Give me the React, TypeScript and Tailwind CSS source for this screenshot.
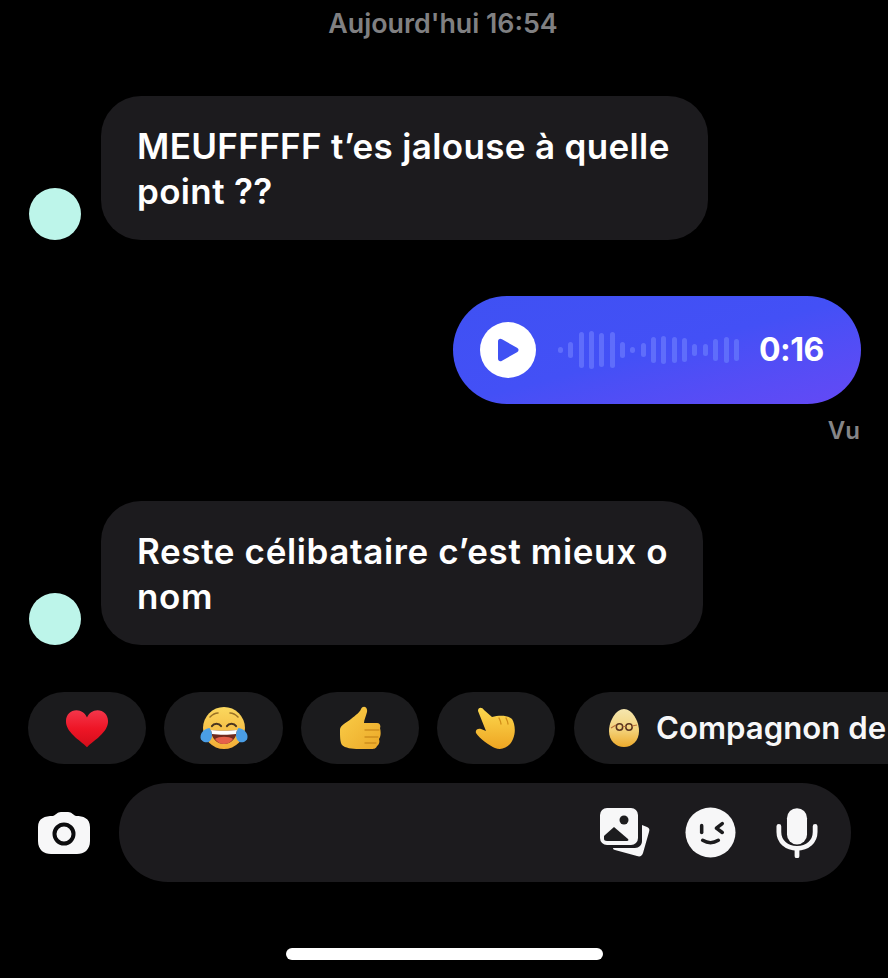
const bars = [6, 16, 36, 38, 34, 36, 16, 6, 14, 26, 28, 26, 24, 12, 12, 22, 26, 22];

function Heart() {
  return (
    <svg width="44" height="39" viewBox="0 0 46 40">
      <defs>
        <linearGradient id="h" x1="0" y1="0" x2="0" y2="1">
          <stop offset="0" stopColor="#f4364a" />
          <stop offset="0.5" stopColor="#ee1526" />
          <stop offset="1" stopColor="#d40d1a" />
        </linearGradient>
      </defs>
      <path d="M23 39.500C15 32 1 24 1 12.500 1 5.500 6 1 12 1c5 0 9 3 11 7.500C25 4 29 1 34 1c6 0 11 4.500 11 11.500C45 24 31 32 23 39.500Z" fill="url(#h)" />
    </svg>
  );
}

function Laugh() {
  return (
    <svg width="48" height="44" viewBox="0 0 48 44">
      <defs>
        <linearGradient id="f" x1="0" y1="0" x2="0" y2="1">
          <stop offset="0" stopColor="#fbd85e" />
          <stop offset="1" stopColor="#f2ad36" />
        </linearGradient>
      </defs>
      <circle cx="24" cy="22" r="21" fill="url(#f)" />
      <path d="M12 20c2-3 7-3 9 0M27 20c2-3 7-3 9 0" stroke="#4a3520" strokeWidth="2.200" fill="none" strokeLinecap="round" />
      <path d="M10 11c2-2 5-4 8-4M30 7c3 0 6 2 8 4" stroke="#9a7226" strokeWidth="1.600" fill="none" strokeLinecap="round" />
      <path d="M11 24c7 1 19 1 26 0 0 8-6 14-13 14S11 32 11 24Z" fill="#6e2a1e" />
      <path d="M15 33c4-3 14-3 18 0-2 3-5 5-9 5s-7-2-9-5Z" fill="#e5604a" />
      <path d="M11 24c7 1 19 1 26 0l-1 4c-7 1-17 1-24 0Z" fill="#fff" />
      <path d="M0.500 31c0-4 3-8 9-9 3 4 4 11-1 14-4 1-8-1-8-5Z" fill="#4a9ee6" />
      <path d="M47.500 31c0-4-3-8-9-9-3 4-4 11 1 14 4 1 8-1 8-5Z" fill="#4a9ee6" />
    </svg>
  );
}

function Thumb() {
  return (
    <svg width="42" height="44" viewBox="0 0 42 44">
      <defs>
        <linearGradient id="t" x1="0" y1="0" x2="1" y2="1">
          <stop offset="0" stopColor="#fbd04a" />
          <stop offset="1" stopColor="#eba828" />
        </linearGradient>
      </defs>
      <path d="M1 24C1 19 7 17 12 13 17 9 21 6 22 3 24-1 29 1 28 6 27 10 25 14 25 17L38 17C41 17 42 20 41 22 42 26 42 30 40 33 41 36 40 39 38 40 37 43 34 43 32 43L20 43C13 43 6 42 3 39 1 36 1 30 1 24Z" fill="url(#t)" />
      <path d="M26 24h14M26 31h13M26 37h11" stroke="#cf8f1c" strokeWidth="1.300" strokeLinecap="round" />
    </svg>
  );
}

function Point() {
  return (
    <svg width="42" height="44" viewBox="0 0 42 44">
      <defs>
        <linearGradient id="p" x1="0" y1="0" x2="0" y2="1">
          <stop offset="0" stopColor="#fcd84e" />
          <stop offset="1" stopColor="#eea522" />
        </linearGradient>
      </defs>
      <path d="M3 5C3 1 7 1 9 4L17 11C24 9 33 9 37 13 40 18 41 26 38 33 35 41 27 45 20 42 15 40 4 32 1 27 0 24 3 22 6 23L11 25Z" fill="url(#p)" />
      <path d="M24 12c1 2 2 4 2 6M31 12c1 2 2 4 2 6" stroke="#d08c18" strokeWidth="1.300" strokeLinecap="round" fill="none" />
    </svg>
  );
}

function Egg() {
  return (
    <svg width="32" height="38" viewBox="0 0 32 38">
      <defs>
        <linearGradient id="e" x1="0" y1="0" x2="0" y2="1">
          <stop offset="0" stopColor="#f5e6ae" />
          <stop offset="0.55" stopColor="#f3d27a" />
          <stop offset="1" stopColor="#eeab2c" />
        </linearGradient>
      </defs>
      <path d="M16 0c8 0 15 12 15 22 0 10-7 16-15 16S1 32 1 22C1 12 8 0 16 0Z" fill="url(#e)" />
      <circle cx="11.500" cy="18" r="3.200" fill="none" stroke="#5a3420" strokeWidth="1.500" />
      <circle cx="21" cy="18" r="3.200" fill="none" stroke="#5a3420" strokeWidth="1.500" />
      <path d="M14.700 17.500h3M3 19l5-3M29 16l-5 1" stroke="#b8703a" strokeWidth="1.200" />
    </svg>
  );
}

function Camera() {
  return (
    <svg width="52" height="44" viewBox="0 0 52 44">
      <path d="M15 5c3-1 4-4 8-4h7c4 0 5 3 8 4 7 0 14 2 14 11v14c0 9-6 13-13 13H13C6 43 0 39 0 30V16C0 7 7 5 15 5Z" fill="#f7f7f8" />
      <circle cx="26" cy="23" r="9.500" fill="none" stroke="#0c0c0e" strokeWidth="4" />
    </svg>
  );
}

function Gallery() {
  return (
    <svg width="50" height="50" viewBox="0 0 50 50">
      <path d="M42 17l5 2c2 1 3 2 2 5l-6 21c-1 3-3 4-6 3l-22-6c-1 0-2-1-2-2h22c4 0 7-3 7-7Z" fill="#f7f7f8" />
      <rect x="0" y="0" width="38" height="37" rx="7" fill="#f7f7f8" />
      <circle cx="24" cy="12" r="4.500" fill="#1c1c1e" />
      <path d="M5 27l9-8 14 12c1 1 0 2-1 2H7c-2 0-3-1-3-2v-3Z" fill="#1c1c1e" />
    </svg>
  );
}

function Sticker() {
  return (
    <svg width="51" height="51" viewBox="0 0 52 52">
      <circle cx="26" cy="26" r="25.500" fill="#f7f7f8" />
      <path d="M17 19v7" stroke="#1c1c1e" strokeWidth="3.600" strokeLinecap="round" />
      <path d="M38 17l-6 4.500 6 4.500" stroke="#1c1c1e" strokeWidth="3.600" strokeLinecap="round" strokeLinejoin="round" fill="none" />
      <path d="M18 34c5 3 11 3 16 0" stroke="#1c1c1e" strokeWidth="3.600" strokeLinecap="round" fill="none" />
    </svg>
  );
}

function Mic() {
  return (
    <svg width="42" height="50" viewBox="0 0 44 52">
      <rect x="11.500" y="0" width="21" height="38" rx="10.500" fill="#f7f7f8" />
      <path d="M3 19v6c0 10 8 17 19 17s19-7 19-17v-6" stroke="#f7f7f8" strokeWidth="5" strokeLinecap="round" fill="none" />
      <path d="M22 42v8" stroke="#f7f7f8" strokeWidth="5" strokeLinecap="round" />
    </svg>
  );
}

function Chip({ children, w }: { children: React.ReactNode; w: string }) {
  return <div className={`flex h-[72px] shrink-0 items-center justify-center rounded-[36px] bg-[#1b1b1d] ${w}`}>{children}</div>;
}

function Incoming({ lines, width, track }: { lines: string[]; width: string; track: string }) {
  return (
    <div className="flex items-end pl-[29px]">
      <div className="h-[52px] w-[52px] shrink-0 rounded-full bg-[#bdf5ea]" />
      <div className={`ml-5 h-[144px] rounded-[40px] bg-[#1c1b1e] pl-9 pt-[28px] text-[35px] leading-[45px] font-semibold text-white ${width} ${track}`}>
        {lines.map((l) => (
          <div key={l} className="whitespace-nowrap">{l}</div>
        ))}
      </div>
    </div>
  );
}

export default function App() {
  return (
    <div className="flex h-[978px] w-[888px] flex-col overflow-hidden bg-black font-['Inter','Liberation_Sans',sans-serif]">
      <div className="mt-[7px] h-[32px] pr-[2px] text-center text-[26.800px] leading-[32px] font-semibold text-[#808082]">Aujourd'hui 16:54</div>
      <div className="mt-[57px]">
        <Incoming width="w-[607px]" track="tracking-[0.35px]" lines={["MEUFFFFF t\u2019es jalouse à quelle", "point ??"]} />
      </div>
      <div className="mt-[56px] flex justify-end pr-[27px]">
        <div className="flex h-[108px] w-[408px] items-center rounded-[54px] bg-gradient-to-br from-[#3f51f3] via-[#4350f6] to-[#6449f5] pl-[27px]">
          <div className="flex h-[56px] w-[56px] items-center justify-center rounded-full bg-white">
            <svg width="24" height="24" viewBox="0 0 24 24">
              <path d="M2 3.500C2 1 4 0 6 1.200l15 8.600c2 1.200 2 3.200 0 4.400L6 22.800c-2 1.200-4 .2-4-2.300Z" fill="#3f51f3" />
            </svg>
          </div>
          <div className="ml-[22px] flex h-[44px] w-[181px] items-center justify-between">
            {bars.map((h, i) => (
              <div key={i} className="w-[5px] rounded-full bg-[#5f6dfb]" style={{ height: h }} />
            ))}
          </div>
          <div className="ml-[20px] text-[32px] font-bold tracking-[-0.5px] text-white">0:16</div>
        </div>
      </div>
      <div className="mt-[13px] h-[28px] pr-[28px] text-right text-[24px] leading-[28px] font-semibold text-[#858587]">Vu</div>
      <div className="mt-[56px]">
        <Incoming width="w-[602px]" track="tracking-[0.63px]" lines={["Reste célibataire c\u2019est mieux o", "nom"]} />
      </div>
      <div className="mt-[47px] flex gap-[18px] pl-[28px]">
        <Chip w="w-[118px]"><Heart /></Chip>
        <Chip w="w-[119px]"><Laugh /></Chip>
        <Chip w="w-[118px]"><Thumb /></Chip>
        <Chip w="w-[118px]"><Point /></Chip>
        <div className="ml-px flex h-[72px] w-[400px] shrink-0 items-center rounded-[36px] bg-[#1b1b1d] pl-[34px]">
          <Egg />
          <span className="ml-[16px] text-[31.200px] font-semibold whitespace-nowrap text-[#f7f7f8]">Compagnon de</span>
        </div>
      </div>
      <div className="mt-[19px] flex items-center pl-[38px]">
        <Camera />
        <div className="ml-[29px] flex h-[99px] w-[732px] items-center rounded-[49px] bg-[#1c1b1e] pl-[481px]">
          <Gallery />
          <div className="ml-[35px]"><Sticker /></div>
          <div className="ml-[40px]"><Mic /></div>
        </div>
      </div>
      <div className="mt-[66px] ml-[286px] h-[12px] w-[317px] rounded-full bg-white" />
    </div>
  );
}
